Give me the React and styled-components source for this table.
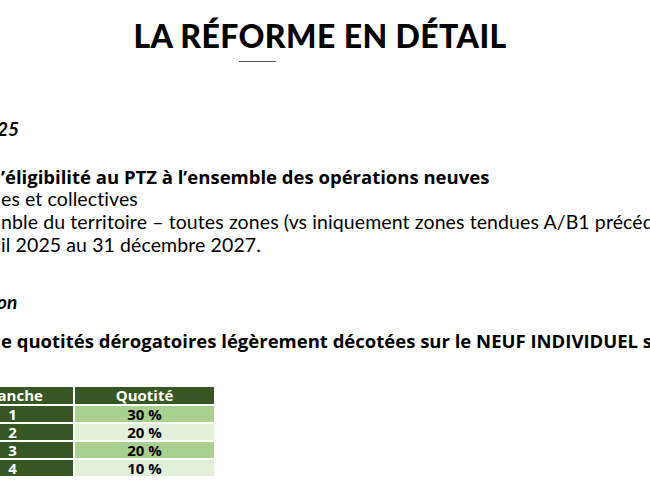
import React from 'react';
import styled, { createGlobalStyle } from 'styled-components';

const GlobalStyle = createGlobalStyle`
  html, body {
    margin: 0;
    padding: 0;
    background: #ffffff;
  }
  body {
    font-family: Lato, "Noto Sans", sans-serif;
    color: #000;
  }
`;

const rows = [
  { tranche: '1', quotite: '30 %', tone: 'strong' },
  { tranche: '2', quotite: '20 %', tone: 'soft' },
  { tranche: '3', quotite: '20 %', tone: 'strong' },
  { tranche: '4', quotite: '10 %', tone: 'soft' },
];

export default function App() {
  return (
    <>
      <GlobalStyle />
      <Slide>
        <Header>
          <Title>LA RÉFORME EN DÉTAIL</Title>
          <Rule />
        </Header>

        <Body>
          <SectionTitle $after={25}>25</SectionTitle>

          <Block>
            <Lead $after={-1}>’éligibilité au PTZ à l’ensemble des opérations neuves</Lead>
            <Line>es et collectives</Line>
            <Line>nble du territoire – toutes zones (vs iniquement zones tendues A/B1 précédemment)</Line>
            <Line>il 2025 au 31 décembre 2027.</Line>
          </Block>

          <SectionTitle $after={16}>on</SectionTitle>

          <Lead>e quotités dérogatoires légèrement décotées sur le NEUF INDIVIDUEL sur</Lead>

          <Table>
            <thead>
              <tr>
                <HeadCell $width={121}>Tranche</HeadCell>
                <HeadCell $width={139}>Quotité</HeadCell>
              </tr>
            </thead>
            <tbody>
              {rows.map((r) => (
                <tr key={r.tranche}>
                  <KeyCell>{r.tranche}</KeyCell>
                  <ValueCell $tone={r.tone}>{r.quotite}</ValueCell>
                </tr>
              ))}
            </tbody>
          </Table>
        </Body>
      </Slide>
    </>
  );
}

const Slide = styled.div`
  width: 650px;
  height: 487px;
  overflow: hidden;
  background: #fff;
  display: flex;
  flex-direction: column;
`;

const Header = styled.header`
  display: flex;
  flex-direction: column;
  align-items: flex-start;
  padding-top: 17px;
`;

const Title = styled.h1`
  align-self: center;
  margin: 0 0 0 -10px;
  font-family: Lato, sans-serif;
  font-weight: 900;
  font-size: 32px;
  line-height: 38px;
  letter-spacing: 0.4px;
  white-space: nowrap;
`;

const Rule = styled.div`
  width: 37px;
  height: 1px;
  margin-top: 6px;
  margin-left: 239px;
  background: #555;
`;

const Body = styled.main`
  display: flex;
  flex-direction: column;
  align-items: flex-start;
  padding-top: 55px;
  white-space: nowrap;
`;

const SectionTitle = styled.div`
  font-weight: 700;
  font-style: italic;
  font-size: 19px;
  line-height: 23px;
  margin-left: -3px;
  margin-bottom: ${(p) => p.$after}px;
`;

const Block = styled.div`
  display: flex;
  flex-direction: column;
  margin-bottom: 34px;
`;

const Lead = styled.div`
  font-family: "Open Sans", sans-serif;
  font-weight: 700;
  font-size: 18.5px;
  line-height: 23px;
  letter-spacing: 0;
  margin-left: 1px;
  margin-bottom: ${(p) => p.$after || 0}px;
`;

const Line = styled.div`
  font-weight: 400;
  font-size: 19.5px;
  line-height: 23px;
  letter-spacing: 0.1px;
  margin-left: 1px;
`;

const Table = styled.table`
  margin-top: 33px;
  margin-left: -50px;
  border-collapse: separate;
  border-spacing: 2px;
  font-family: "Open Sans", sans-serif;
  font-weight: 700;
  font-size: 15px;
  line-height: 16px;
  text-align: center;
`;

const HeadCell = styled.th`
  width: ${(p) => p.$width}px;
  height: 16px;
  padding: 0 0 1px;
  background: #375623;
  color: #fff;
  font-weight: 700;
`;

const KeyCell = styled.td`
  height: 16px;
  padding: 0;
  background: #375623;
  color: #fff;
`;

const ValueCell = styled.td`
  height: 16px;
  padding: 0;
  background: ${(p) => (p.$tone === 'strong' ? '#a9d08e' : '#e2efda')};
  color: #000;
`;
